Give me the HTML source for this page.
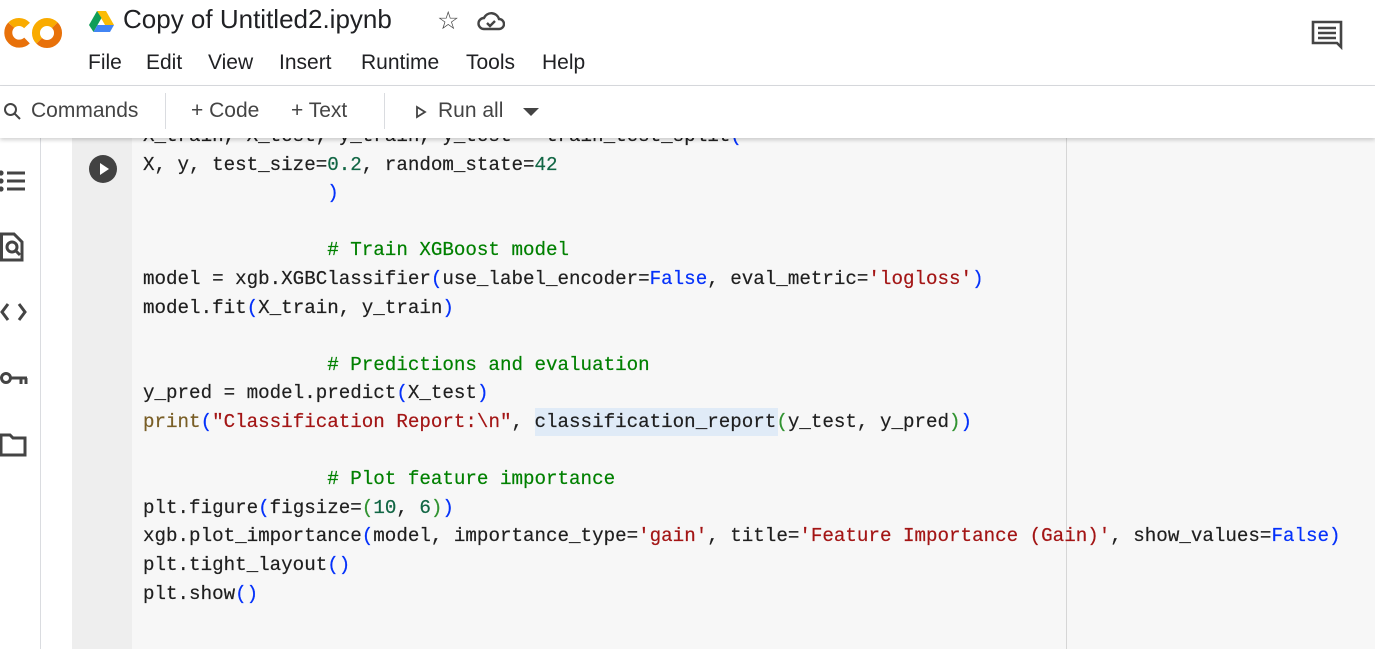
<!DOCTYPE html>
<html><head><meta charset="utf-8"><style>
body{margin:0;width:1375px;height:649px;overflow:hidden;background:#fff;font-family:"Liberation Sans",sans-serif;position:relative}
.abs{position:absolute}
.code{position:absolute;left:143px;top:122px;font-family:"Liberation Mono",monospace;font-size:19.2px;line-height:28.6px;white-space:pre;color:#1f1f1f;-webkit-text-stroke:0.2px #1f1f1f}
.g{color:#008000;-webkit-text-stroke-color:#008000}.n{color:#116644;-webkit-text-stroke-color:#116644}.b{color:#0431fa;-webkit-text-stroke-color:#0431fa}.s{color:#a31515;-webkit-text-stroke-color:#a31515}.k{color:#795e26;-webkit-text-stroke-color:#795e26}.p{color:#319331;-webkit-text-stroke-color:#319331}
.tb{font-size:21px;color:#444}
</style></head><body>
<div class="abs" style="left:0;top:138px;width:40px;height:511px;border-right:1px solid #dadce0;background:#fff"></div>
<div class="abs" style="left:72px;top:138px;width:60px;height:511px;background:#eeeeee"></div>
<div class="abs" style="left:132px;top:138px;width:1243px;height:511px;background:#f7f7f7"></div>
<div class="abs" style="left:1066px;top:138px;width:1px;height:511px;background:#d6d6d6"></div>
<div class="abs" style="left:535px;top:408px;width:243px;height:28px;background:#e0ebf7"></div>
<div class="code">X_train, X_test, y_train, y_test = train_test_split<span class="b">(</span>
X, y, test_size=<span class="n">0.2</span>, random_state=<span class="n">42</span>
                <span class="b">)</span>

                <span class="g"># Train XGBoost model</span>
model = xgb.XGBClassifier<span class="b">(</span>use_label_encoder=<span class="b">False</span>, eval_metric=<span class="s">'logloss'</span><span class="b">)</span>
model.fit<span class="b">(</span>X_train, y_train<span class="b">)</span>

                <span class="g"># Predictions and evaluation</span>
y_pred = model.predict<span class="b">(</span>X_test<span class="b">)</span>
<span class="k">print</span><span class="b">(</span><span class="s">"Classification Report:\n"</span>, classification_report<span class="p">(</span>y_test, y_pred<span class="p">)</span><span class="b">)</span>

                <span class="g"># Plot feature importance</span>
plt.figure<span class="b">(</span>figsize=<span class="p">(</span><span class="n">10</span>, <span class="n">6</span><span class="p">)</span><span class="b">)</span>
xgb.plot_importance<span class="b">(</span>model, importance_type=<span class="s">'gain'</span>, title=<span class="s">'Feature Importance (Gain)'</span>, show_values=<span class="b">False</span><span class="b">)</span>
plt.tight_layout<span class="b">()</span>
plt.show<span class="b">()</span></div>
<svg class="abs" style="left:89px;top:155px" width="28" height="28" viewBox="0 0 28 28"><circle cx="14" cy="14" r="14" fill="#424242"/><path d="M11 8 L20 14 L11 20Z" fill="#fff"/></svg>
<svg class="abs" style="left:0;top:165px" width="30" height="300" viewBox="0 0 30 300" fill="none" stroke="#444" stroke-width="3">
<circle cx="1" cy="8" r="2.6" fill="#444" stroke="none"/><circle cx="1" cy="16" r="2.6" fill="#444" stroke="none"/><circle cx="1" cy="24" r="2.6" fill="#444" stroke="none"/>
<path d="M7 8H25M7 16H25M7 24H25"/>
<path d="M1.5 69H14L22 77V95H1.5Z"/><circle cx="12" cy="82" r="5"/><path d="M15.5 85.5L20 90"/>
<path d="M8 139L2 147L8 155M19 139L25 147L19 155"/>
<circle cx="6" cy="213" r="4.5"/><path d="M11 213H27M21 213V219M26 213V219"/>
<path d="M1 270H10L13 273H25V290H1Z"/>
</svg>
<div class="abs" style="left:0;top:0;width:1375px;height:85px;background:#fff;border-bottom:1px solid #dadce0"></div>
<svg class="abs" style="left:2px;top:15px" width="64" height="36" viewBox="0 0 64 36" fill="none" stroke-width="8">
<path d="M25 10.5A11 11 0 0 0 9.2 10.2" stroke="#f9ab00"/>
<path d="M9.2 10.2A11 11 0 0 0 25 25.5" stroke="#e8710a"/>
<path d="M37.2 25.8A11 11 0 0 1 52.8 10.2" stroke="#f9ab00"/>
<path d="M52.8 10.2A11 11 0 0 1 37.2 25.8" stroke="#e8710a"/>
</svg>
<svg class="abs" style="left:89px;top:11px" width="25" height="22" viewBox="0 0 25 22"><path d="M8 0H17L25 14H16Z" fill="#fbbc04"/><path d="M8 0L0 14L4.5 21L12.5 7Z" fill="#0f9d58"/><path d="M4.5 21H21L25 14H8.5Z" fill="#4285f4"/></svg>
<div class="abs" style="left:123px;top:4px;font-size:26px;color:#202124">Copy of Untitled2.ipynb</div>
<div class="abs" style="left:437px;top:6px;font-size:25px;color:#444">☆</div>
<svg class="abs" style="left:477px;top:9px" width="28" height="22" viewBox="0 0 28 22" fill="none" stroke="#444" stroke-width="2.4"><path d="M7 20H22A5 5 0 0 0 22 10A8 8 0 0 0 7 9A5.5 5.5 0 0 0 7 20Z"/><path d="M10 14L13 17L18 12"/></svg>
<div class="abs" style="left:88px;top:51px;font-size:21px;color:#202124">
<span style="position:absolute;left:0">File</span><span style="position:absolute;left:58px">Edit</span><span style="position:absolute;left:120px">View</span><span style="position:absolute;left:191px">Insert</span><span style="position:absolute;left:273px">Runtime</span><span style="position:absolute;left:378px">Tools</span><span style="position:absolute;left:454px">Help</span></div>
<svg class="abs" style="left:1311px;top:20px" width="32" height="32" viewBox="0 0 32 32"><path d="M2 2H30V27L26 23H2Z" fill="none" stroke="#444" stroke-width="2.6"/><path d="M7 8H25M7 13H25M7 18H25" stroke="#444" stroke-width="2.6"/></svg>
<div class="abs" style="left:0;top:86px;width:1375px;height:52px;background:#fff;box-shadow:0 2px 4px rgba(0,0,0,.18)"></div>
<div class="abs" style="left:165px;top:93px;width:1px;height:36px;background:#dadce0"></div>
<div class="abs" style="left:384px;top:93px;width:1px;height:36px;background:#dadce0"></div>
<svg class="abs" style="left:3px;top:102px" width="20" height="20" viewBox="0 0 20 20" fill="none" stroke="#444" stroke-width="2"><circle cx="7.5" cy="7.5" r="5.5"/><path d="M11.5 11.5L17 17"/></svg>
<div class="abs tb" style="left:31px;top:99px">Commands</div>
<div class="abs tb" style="left:191px;top:99px">+ Code</div>
<div class="abs tb" style="left:291px;top:99px">+ Text</div>
<svg class="abs" style="left:414px;top:105px" width="14" height="14" viewBox="0 0 14 14"><path d="M3 2L11 7L3 12Z" fill="none" stroke="#444" stroke-width="1.8"/></svg>
<div class="abs tb" style="left:438px;top:99px">Run all</div>
<svg class="abs" style="left:523px;top:108px" width="16" height="8" viewBox="0 0 16 8"><path d="M0 0H16L8 8Z" fill="#444"/></svg>
</body></html>
